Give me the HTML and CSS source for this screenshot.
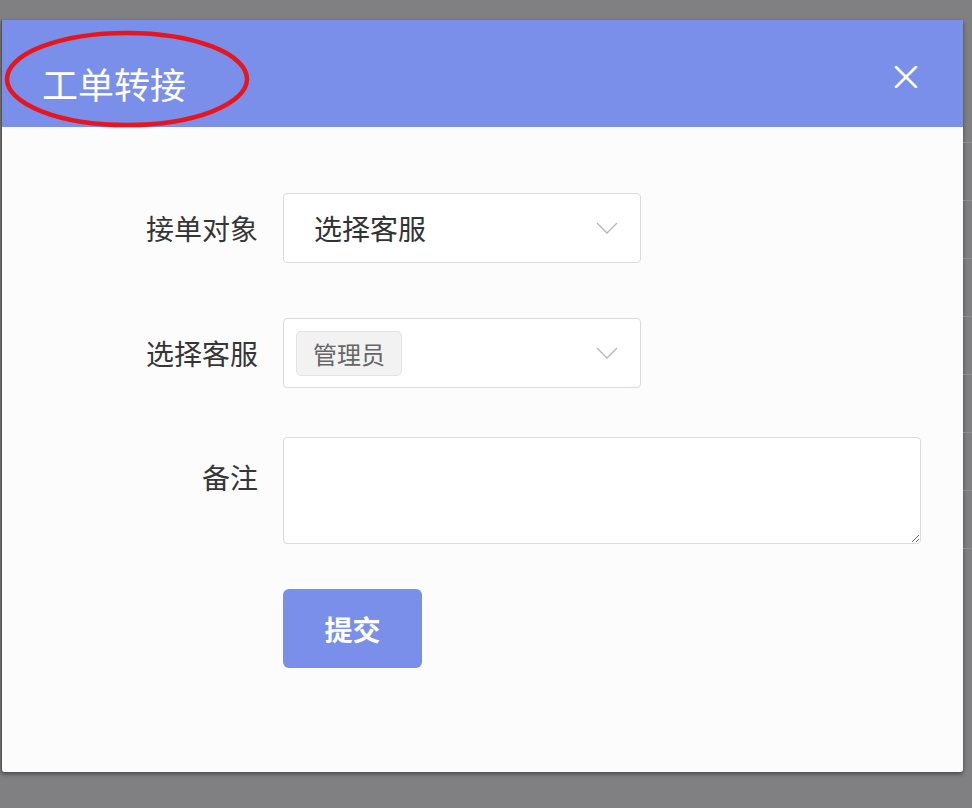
FILE: index.html
```html
<!DOCTYPE html>
<html>
<head>
<meta charset="utf-8">
<title>工单转接</title>
<link rel="stylesheet" href="styles.css">
</head>
<body>
<div class="dialog">
  <div class="dialog-head">
    <span class="dialog-title">工单转接</span>
    <svg class="mark" width="250" height="100" viewBox="0 0 250 100">
      <ellipse cx="125" cy="49" rx="120" ry="46" fill="none" stroke="#e8161c" stroke-width="4.5"/>
    </svg>
    <svg class="close" width="24" height="22" viewBox="0 0 24 22">
      <path d="M2 1 L22 21 M22 1 L2 21" stroke="#fff" stroke-width="2.6" stroke-linecap="round"/>
    </svg>
  </div>
  <div class="dialog-body">
    <div class="row row-first">
      <label class="row-label">接单对象</label>
      <div class="select">
        <span class="select-text">选择客服</span>
        <svg class="arrow" width="22" height="12" viewBox="0 0 22 12"><path d="M1 1 L11 11 L21 1" fill="none" stroke="#b4b7bd" stroke-width="1.3"/></svg>
      </div>
    </div>
    <div class="row row-second">
      <label class="row-label">选择客服</label>
      <div class="select select-tags">
        <span class="tag">管理员</span>
        <svg class="arrow" width="22" height="12" viewBox="0 0 22 12"><path d="M1 1 L11 11 L21 1" fill="none" stroke="#b4b7bd" stroke-width="1.3"/></svg>
      </div>
    </div>
    <div class="row row-top">
      <label class="row-label label-top">备注</label>
      <textarea class="note"></textarea>
    </div>
    <div class="row">
      <span class="row-label"></span>
      <button class="submit">提交</button>
    </div>
  </div>
</div>
<div class="backdrop">
  <div class="bg-row"></div>
  <div class="bg-row"></div>
  <div class="bg-row"></div>
  <div class="bg-row"></div>
  <div class="bg-row"></div>
  <div class="bg-row"></div>
  <div class="bg-row"></div>
  <div class="bg-row"></div>
</div>
</body>
</html>
```

FILE: styles.css
```css
* {
  box-sizing: border-box;
}
body {
  margin: 0;
  padding: 20px 0 0 1px;
  height: 808px;
  overflow: hidden;
  background: #807f81;
  font-family: "Noto Sans CJK SC", "Noto Sans", sans-serif;
  display: flex;
  align-items: flex-start;
}
.dialog {
  width: 962px;
  height: 752px;
  flex: none;
  background: #fdfcfd;
  border-left: 1px solid #555;
  border-radius: 0 0 3px 3px;
  box-shadow: 0 2px 4px rgba(0, 0, 0, 0.45);
}
.dialog-head {
  position: relative;
  height: 107px;
  background: #7a8fea;
  display: flex;
  align-items: center;
  justify-content: space-between;
  padding: 0 45px 0 40px;
}
.dialog-title {
  color: #fff;
  font-size: 36px;
  line-height: 40px;
  margin-top: 18px;
}
.mark {
  position: absolute;
  left: 0;
  top: 10px;
}
.close {
  margin-top: 6px;
}
.dialog-body {
  padding: 66px 0 0 135px;
}
.row {
  display: flex;
  align-items: center;
  margin-bottom: 55px;
}
.row-second {
  margin-bottom: 49px;
}
.row-top {
  align-items: flex-start;
  margin-bottom: 45px;
}
.row-label {
  width: 121px;
  margin-right: 25px;
  text-align: right;
  font-size: 28px;
  line-height: 40px;
  color: #363636;
}
.label-top {
  padding-top: 20px;
}
.select {
  width: 358px;
  height: 70px;
  border: 1px solid #d9dbe0;
  border-radius: 4px;
  background: #fff;
  display: flex;
  align-items: center;
  justify-content: space-between;
  padding: 0 22px 0 30px;
}
.select-tags {
  padding-left: 12px;
}
.select-text {
  font-size: 28px;
  color: #333;
}
.tag {
  width: 106px;
  height: 45px;
  display: flex;
  align-items: center;
  justify-content: center;
  background: #f2f2f3;
  border: 1px solid #e3e3e6;
  border-radius: 5px;
  font-size: 24px;
  color: #666;
}
.note {
  width: 638px;
  height: 107px;
  border: 1px solid #d9dbe0;
  border-radius: 4px;
  background: #fff;
  margin: 0;
  font-family: inherit;
}
.submit {
  width: 139px;
  height: 79px;
  border: none;
  border-radius: 6px;
  background: #7a8fea;
  color: #fff;
  font-family: inherit;
  font-size: 28px;
  font-weight: bold;
}
.backdrop {
  flex: 1;
  padding-top: 65px;
}
.bg-row {
  height: 58px;
  border-bottom: 1px solid #8c8b8d;
}
```
